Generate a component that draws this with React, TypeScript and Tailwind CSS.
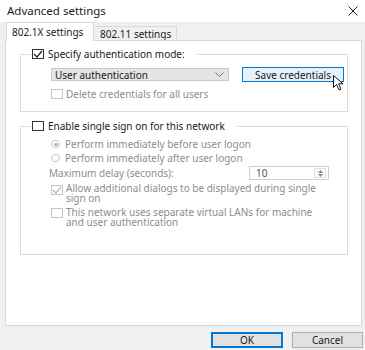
const Check = ({ checked, disabled }: { checked?: boolean; disabled?: boolean }) => (
  <span
    className={`w-[12px] h-[10px] shrink-0 border bg-white flex items-center justify-center ${
      disabled ? "border-[#c4c4c4]" : "border-[#333]"
    }`}
  >
    {checked && (
      <svg width="10" height="8" viewBox="0 0 10 8" fill="none">
        <path d="M1 4 L4 7 L9 1" stroke={disabled ? "#b5b5b5" : "#222"} strokeWidth="1.2" />
      </svg>
    )}
  </span>
)

const Radio = ({ selected }: { selected?: boolean }) => (
  <span className="w-[9px] h-[8px] shrink-0 rounded-full border border-[#c4c4c4] bg-white flex items-center justify-center">
    {selected && <span className="w-[4px] h-[3px] rounded-full bg-[#b5b5b5]" />}
  </span>
)

const App = () => {
  return (
    <div className="w-[365px] h-[350px] bg-[#f0f0f0] flex flex-col font-['Noto_Sans',sans-serif] text-[10px] leading-[12px] text-[#1a1a1a] overflow-hidden relative">
      {/* title bar */}
      <div className="h-[22px] bg-white flex items-center justify-between pl-[7px] pr-[4px] shrink-0">
        <span className="text-[11.5px] leading-[14px]">Advanced settings</span>
        <svg width="10" height="10" viewBox="0 0 10 10" className="mr-[3px]">
          <path d="M0.5 0.5 L9.5 9.5 M9.5 0.5 L0.5 9.5" stroke="#222" strokeWidth="1" />
        </svg>
      </div>

      {/* tabs */}
      <div className="h-[18px] flex items-end pl-[6px] shrink-0">
        <div className="h-[19px] w-[88px] bg-white border border-b-0 border-[#d9d9d9] relative z-10 -mb-px pl-[5px] pt-[3px]">
          802.1X settings
        </div>
        <div className="h-[14px] w-[83px] bg-[#f0f0f0] border border-l-0 border-b-0 border-[#d9d9d9] pl-[6px] pt-px">
          802.11 settings
        </div>
      </div>

      {/* tab panel */}
      <div className="ml-[5px] w-[357px] h-[286px] bg-white border border-[#d9d9d9] shrink-0 flex flex-col">
        <fieldset className="ml-[14px] w-[328px] mt-[6px] border border-[#dcdcdc] px-0 pb-[11px] pt-0">
          <legend className="ml-[10px] pl-px pr-[12px] flex items-center gap-[4px] h-[14px]">
            <Check checked />
            <span>Specify authentication mode:</span>
          </legend>
          <div className="flex items-center mt-[6px] ml-[30px] h-[15px]">
            <div className="w-[178px] h-[13px] bg-[#e5e5e5] border border-[#c8c8c8] flex items-center justify-between pl-[3px] pr-[4px]">
              <span>User authentication</span>
              <svg width="9" height="5" viewBox="0 0 9 5" fill="none">
                <path d="M0.5 0.5 L4.5 4.5 L8.5 0.5" stroke="#777" strokeWidth="1" />
              </svg>
            </div>
            <div className="ml-[13px] w-[102px] h-[15px] bg-[#e5f1fb] border border-[#0078d7] flex items-center justify-center">
              Save credentials
            </div>
          </div>
          <div className="flex items-center gap-[3px] mt-[6px] ml-[30px] h-[12px] text-[#8d8d8d]">
            <Check disabled />
            <span>Delete credentials for all users</span>
          </div>
        </fieldset>

        <fieldset className="ml-[14px] w-[328px] h-[136px] mt-[7px] border border-[#dcdcdc] p-0">
          <legend className="ml-[10px] pl-px pr-[12px] flex items-center gap-[4px] h-[14px]">
            <Check />
            <span>Enable single sign on for this network</span>
          </legend>
          <div className="ml-[30px] text-[#8d8d8d]">
            <div className="flex items-center gap-[5px] mt-[5px] h-[12px]">
              <Radio selected />
              <span>Perform immediately before user logon</span>
            </div>
            <div className="flex items-center gap-[5px] mt-[2px] h-[12px]">
              <Radio />
              <span>Perform immediately after user logon</span>
            </div>
            <div className="flex items-center justify-between mt-[2px] h-[14px] -ml-[2px] mr-[18px]">
              <span>Maximum delay (seconds):</span>
              <div className="w-[80px] h-[14px] border border-[#d0d0d0] flex items-center justify-between pl-[6px] pr-[2px] text-[#555]">
                <span>10</span>
                <span className="w-[12px] h-[10px] border border-[#e0e0e0] flex flex-col items-center justify-center gap-[1px]">
                  <svg width="5" height="3" viewBox="0 0 5 3"><path d="M0 3 L2.5 0 L5 3 Z" fill="#888" /></svg>
                  <svg width="5" height="3" viewBox="0 0 5 3"><path d="M0 0 L2.5 3 L5 0 Z" fill="#888" /></svg>
                </span>
              </div>
            </div>
            <div className="flex items-start gap-[3px] mt-[3px]">
              <span className="mt-[2px]"><Check checked disabled /></span>
              <span className="leading-[10px] w-[260px]">Allow additional dialogs to be displayed during single sign on</span>
            </div>
            <div className="flex items-start gap-[3px] mt-[4px]">
              <span className="mt-[1px]"><Check disabled /></span>
              <span className="leading-[10px] w-[260px]">This network uses separate virtual LANs for machine and user authentication</span>
            </div>
          </div>
        </fieldset>
      </div>

      {/* buttons */}
      <div className="flex justify-end gap-[9px] pr-[2px] pt-[6px]">
        <div className="w-[72px] h-[16px] bg-[#e1e1e1] border-2 border-[#0078d7] flex items-center justify-center">OK</div>
        <div className="w-[71px] h-[16px] bg-[#e1e1e1] border border-[#adadad] flex items-center justify-center">Cancel</div>
      </div>

      {/* mouse cursor over Save credentials */}
      <svg className="absolute left-[333px] top-[75px]" width="13" height="16" viewBox="0 0 13 16">
        <path d="M0.5 0.5 L0.5 12.5 L3.5 9.5 L6 15 L8 14 L5.5 8.8 L10 8.8 Z" fill="white" stroke="#111" strokeWidth="1" />
      </svg>
    </div>
  )
}

export default App
